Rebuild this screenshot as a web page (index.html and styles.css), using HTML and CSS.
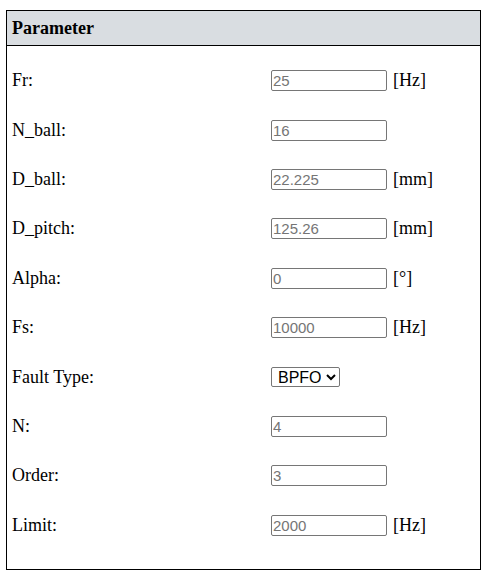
FILE: index.html
```html
<!DOCTYPE html>
<html>
<head>
<meta charset="utf-8">
<link rel="stylesheet" href="styles.css">
</head>
<body>
<div class="panel">
  <div class="panel-head">Parameter</div>
  <div class="panel-body">
    <div class="row"><span class="label">Fr:</span><input class="field" placeholder="25"><span class="unit">[Hz]</span></div>
    <div class="row"><span class="label">N_ball:</span><input class="field" placeholder="16"></div>
    <div class="row"><span class="label">D_ball:</span><input class="field" placeholder="22.225"><span class="unit">[mm]</span></div>
    <div class="row"><span class="label">D_pitch:</span><input class="field" placeholder="125.26"><span class="unit">[mm]</span></div>
    <div class="row"><span class="label">Alpha:</span><input class="field" placeholder="0"><span class="unit">[°]</span></div>
    <div class="row"><span class="label">Fs:</span><input class="field" placeholder="10000"><span class="unit">[Hz]</span></div>
    <div class="row"><span class="label">Fault Type:</span><select class="pick"><option>BPFO</option><option>BPFI</option><option>BSF</option><option>FTF</option></select></div>
    <div class="row"><span class="label">N:</span><input class="field" placeholder="4"></div>
    <div class="row"><span class="label">Order:</span><input class="field" placeholder="3"></div>
    <div class="row"><span class="label">Limit:</span><input class="field" placeholder="2000"><span class="unit">[Hz]</span></div>
  </div>
</div>
</body>
</html>
```
FILE: styles.css
```css
html, body {
  margin: 0;
  padding: 0;
  background: #ffffff;
}
body {
  font-family: "Liberation Serif", "Times New Roman", serif;
  font-size: 18px;
  color: #000;
  padding: 10px 0 0 6px;
}
.panel {
  width: 473px;
  border: 1px solid #000;
}
.panel-head {
  background: #d9dde1;
  border-bottom: 1px solid #000;
  height: 35px;
  box-sizing: border-box;
  padding: 0 5px;
  font-weight: bold;
  display: flex;
  align-items: center;
}
.panel-body {
  padding: 10px 0 19px 0;
}
.row {
  height: 49.4px;
  display: flex;
  align-items: center;
  padding-left: 5px;
}
.label {
  width: 259px;
  flex: none;
}
.field {
  width: 116px;
  height: 21px;
  box-sizing: border-box;
  border: 1px solid #767676;
  border-radius: 2px;
  padding: 0 1px;
  margin: 0;
  font-family: "Liberation Sans", Arial, sans-serif;
  font-size: 15px;
  color: #000;
}
.field::placeholder {
  color: #757575;
}
.unit {
  margin-left: 6px;
}
.pick {
  width: 69px;
  height: 20px;
  margin: 0;
  padding: 0 2px;
  font-family: "Liberation Sans", Arial, sans-serif;
  font-size: 16px;
  border: 1px solid #767676;
  border-radius: 2px;
  background: #fff;
  color: #000;
}
```
